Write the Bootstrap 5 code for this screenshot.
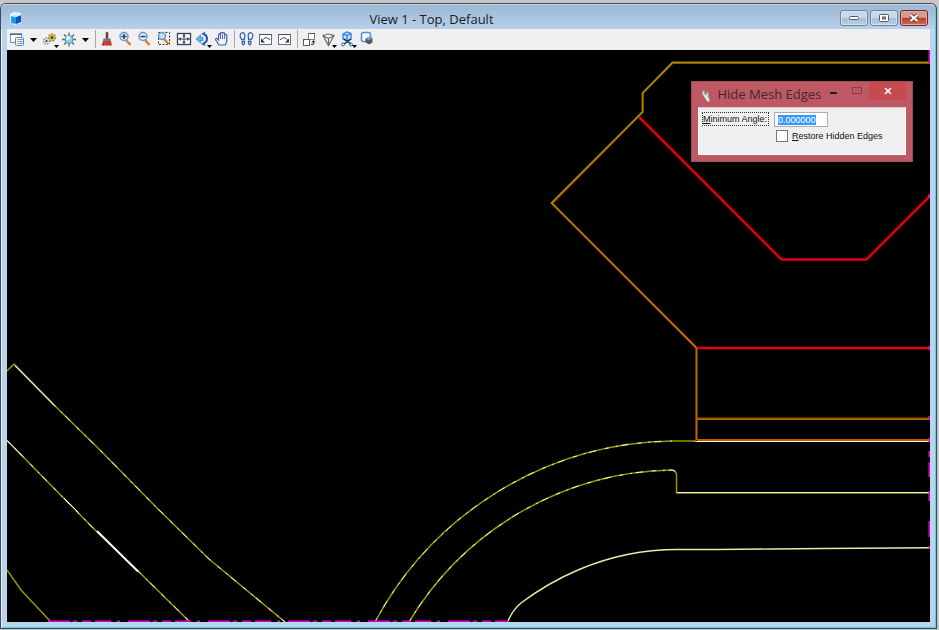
<!DOCTYPE html>
<html lang="en">
<head>
<meta charset="utf-8">
<meta name="viewport" content="width=device-width, initial-scale=1">
<title>View 1 - Top, Default</title>
<link href="https://cdn.jsdelivr.net/npm/bootstrap@5.3.0/dist/css/bootstrap.min.css" rel="stylesheet">
<style>
  body { background: #c4c6c6; font-family: "Open Sans", "Noto Sans", sans-serif; }
  .desk { padding: 3px 2px 1px 0; }
  .view-window {
    border: 1px solid #454b52; border-right-color: #2d4c55; border-bottom-color: #24545c;
    border-radius: 6px 6px 0 0;
    background: #bcd3ec; padding: 0 6px 6px 6px;
    box-shadow: inset 1px 1px 0 #e4eef8, inset -1px -1px 0 #55cde4;
  }
  .view-title {
    height: 25px; margin: 0 -5px 0 -6px; padding: 0 7px 0 8px;
    background: linear-gradient(#9ab5d2, #b9d0ea);
    border-radius: 5px 5px 0 0; box-shadow: inset 0 1px 0 #c3d4e6;
  }
  .view-title h1 { font-size: 13px; line-height: 24px; padding-top: 4px; color: #1a1a1a; }
  .win-group { gap: 2px; margin-top: 2px; }
  .win-btn {
    width: 28px; height: 16px; padding: 0; border: 1px solid #6f839b; border-radius: 3px;
    background: linear-gradient(#c8d9ea 48%, #a4bcd6 52%, #bcd1e6);
    box-shadow: inset 0 0 0 1px #d5e3f0;
  }
  .win-close { border-color: #6b2a26; background: linear-gradient(#d99a8e 45%, #bd3d2c 52%, #cf6b57); box-shadow: inset 0 0 0 1px #e0aaa0; }
  .tools { height: 21px; background: #f0f0f0; }
  .tool { width: 19px; height: 21px; padding: 0; border: 0; background: none; }
  .tool-drop { width: 14px; }
  .tool-sep { width: 1px; height: 18px; margin: 1px 2px 0 3px; background: #a9a9a9; }
  .canvas { background: #000; min-height: 0; }
  .tool-box { top: 31px; right: 17px; width: 222px; padding: 0 7px 7px; background: #bc5964; box-shadow: inset 0 0 0 1px #a34d57; }
  .tool-head { height: 26px; }
  .tool-head h2 { font-size: 13px; line-height: 26px; color: #42282c; margin-left: 7px; }
  .cap-btn { border: 0; padding: 0; background: none; width: 24px; height: 18px; }
  .cap-close { width: 39px; background: #c64a50; margin-top: 1px; }
  .tool-body { height: 48px; background: #f0f0f0; border: 1px solid #fff; border-top-color: #dfc3c6; padding: 4px 3px 0; font-family: "Liberation Sans", Arial, sans-serif; font-size: 9px; line-height: 14px; color: #111; }
  .angle-label { border: 1px dotted #333; min-width: 67px; height: 14px; line-height: 13px; white-space: nowrap; }
  .angle-input { width: 54px; height: 15px; margin-left: 5px; padding: 0 0 0 3px; border: 1px solid #abadb3; border-radius: 0; background: #fff; font-size: 9px; outline: 0; color: #111; }
  .angle-input::selection { background: #3399ff; color: #fff; }
  .restore { margin: 2px 0 0 74px; white-space: nowrap; }
  .restore input { appearance: none; width: 12px; height: 12px; margin: 0 4px 0 0; border: 1px solid #777; background: #fff; }
  .restore input:checked { background: #3399ff; }
</style>
<script src="https://cdn.jsdelivr.net/npm/bootstrap@5.3.0/dist/js/bootstrap.bundle.min.js"></script>
</head>
<body>
<div class="desk vh-100">
<main class="view-window h-100 d-flex flex-column">
  <header class="view-title d-flex align-items-center">
    <svg class="mt-1" width="14" height="16" viewBox="0 0 14 16" aria-hidden="true"><path d="M1 3l4-2 7 1v10l-6 2-5-2z" fill="#e8f6ff"/><path d="M2 5l5 1v7l-5-1z" fill="#1c9bf0"/><path d="M7 6l5-2v7l-5 2z" fill="#0a55c8"/><path d="M2 5l4-2 6 1-5 2z" fill="#c8efff"/></svg>
    <h1 class="flex-grow-1 text-center fw-normal m-0">View 1 - Top, Default</h1>
    <div class="d-flex win-group">
      <button class="win-btn d-flex align-items-center justify-content-center" aria-label="Minimize"><svg width="12" height="6"><rect x="1.500" y="1.500" width="9" height="3" rx="1" fill="#fff" stroke="#535b66"/></svg></button>
      <button class="win-btn d-flex align-items-center justify-content-center" aria-label="Maximize"><svg width="12" height="10"><rect x="1.500" y="1.500" width="9" height="7" rx="1" fill="#fff" stroke="#535b66"/><rect x="4.500" y="4" width="3" height="2" fill="#9ab" stroke="#535b66"/></svg></button>
      <button class="win-btn win-close d-flex align-items-center justify-content-center" aria-label="Close"><svg width="12" height="10"><path d="M2.500 2l7 6M9.500 2l-7 6" stroke="#55474a" stroke-width="4"/><path d="M2.500 2l7 6M9.500 2l-7 6" stroke="#fff" stroke-width="2"/></svg></button>
    </div>
  </header>

  <nav class="tools d-flex" aria-label="View tools">
    <button class="tool" aria-label="View attributes"><svg class="d-block" width="19" height="21" fill="none"><rect x="3.500" y="4.500" width="11" height="9" fill="#fff" stroke="#8392ad"/><path d="M3 5.500h12" stroke="#4b6490"/><rect x="8.500" y="8.500" width="8" height="8" rx="1" fill="#f4f9ff" stroke="#458bd6"/><path d="M10 10.500h2M10 12.500h2M10 14.500h2" stroke="#e09a2c"/><path d="M12.500 10.500h3M12.500 12.500h3M12.500 14.500h3" stroke="#4580c8"/></svg></button>
    <button class="tool tool-drop" aria-label="View attributes menu"><svg class="d-block" width="14" height="21"><path d="M4 9h7l-3.500 4z" fill="#000"/></svg></button>
    <button class="tool" aria-label="Display style"><svg class="d-block" width="19" height="21" fill="none"><circle cx="12" cy="8.500" r="3.500" fill="#d8c35a" stroke="#a8953c" stroke-width="1.500" stroke-dasharray="2 1"/><circle cx="12" cy="8.500" r="1.500" fill="#4c4826"/><circle cx="6.500" cy="12" r="3" fill="#dcefe9" stroke="#829ba3" stroke-width="1.500" stroke-dasharray="1.500 1"/><circle cx="6.500" cy="12" r="1.200" fill="#465a60"/><path d="M14 16h5l-2.500 3z" fill="#000"/></svg></button>
    <button class="tool" aria-label="Adjust brightness"><svg class="d-block" width="19" height="21" fill="none"><path d="M10 3.500v14M3 10.500h14M5 5.500l10 10M15 5.500l-10 10" stroke="#4d6578" stroke-width="1.300"/><circle cx="10" cy="10.500" r="4" fill="#8fd0ee" stroke="#6b8ca3"/><circle cx="9" cy="9" r="2" fill="#e4f8ff"/></svg></button>
    <button class="tool tool-drop" aria-label="Brightness menu"><svg class="d-block" width="14" height="21"><path d="M4 9h7l-3.500 4z" fill="#000"/></svg></button>
    <span class="tool-sep"></span>
    <button class="tool" aria-label="Update view"><svg class="d-block" width="19" height="21"><path d="M8 3.500q1-1 2 0v6h-2z" fill="#8b3c35" stroke="#5d2525" stroke-width=".5"/><path d="M5.500 9.500h7l.5 3h-8z" fill="#6f7683"/><path d="M5 12h8l1 4.500H3.500z" fill="#d8442f"/><path d="M6 12.500l-.5 4M9 12.500v4M11.500 12.500l.5 4" stroke="#9f332e"/></svg></button>
    <button class="tool" aria-label="Zoom in"><svg class="d-block" width="19" height="21" fill="none"><path d="M9 11l4.500 5" stroke="#d28432" stroke-width="2.500"/><circle cx="7" cy="7.500" r="4" fill="#dff0fb" stroke="#6d98c4" stroke-width="1.500"/><path d="M7 5v5M4.500 7.500h5" stroke="#253a6b" stroke-width="1.500"/></svg></button>
    <button class="tool" aria-label="Zoom out"><svg class="d-block" width="19" height="21" fill="none"><path d="M9 11l4.500 5" stroke="#d28432" stroke-width="2.500"/><circle cx="7" cy="7.500" r="4" fill="#dff0fb" stroke="#6d98c4" stroke-width="1.500"/><path d="M4.500 7.500h5" stroke="#253a6b" stroke-width="1.500"/></svg></button>
    <button class="tool" aria-label="Window area"><svg class="d-block" width="19" height="21" fill="none"><path d="M3.500 3.500h11v12h-11z" stroke="#333" stroke-dasharray="2 1.500"/><path d="M9 10l4.500 5" stroke="#d28432" stroke-width="2.500"/><circle cx="7" cy="7" r="3.500" fill="#bfe2f7" stroke="#6d98c4" stroke-width="1.500"/></svg></button>
    <button class="tool" aria-label="Fit view"><svg class="d-block" width="19" height="21" fill="none"><rect x="3.500" y="4.500" width="13" height="11" fill="#fff" stroke="#344055" stroke-width="1.300"/><path d="M10 5v10M4 10h12" stroke="#344055"/><path d="M8 7.500l2-2 2 2zM8 12.500l2 2 2-2zM7 8l-2 2 2 2zM13 8l2 2-2 2z" fill="#344055"/></svg></button>
    <button class="tool" aria-label="Rotate view"><svg class="d-block" width="19" height="21" fill="none"><path d="M11 5c4 2 4 7.500 0 9.500" stroke="#2857a6" stroke-width="2"/><path d="M3 10l4.500-4v2.500H10v3H7.500V14z" fill="#5cbcf6" stroke="#2b78c4" stroke-width=".7"/><path d="M12 2.500v4.500l-4-2zM12 12.500V17l-4-2z" fill="#3568b8"/><path d="M14 16h5l-2.500 3z" fill="#000"/></svg></button>
    <button class="tool" aria-label="Pan view"><svg class="d-block" width="19" height="21" fill="none"><g transform="translate(1 0)"><path d="M6 16l-3.300-5c-.8-1.600.8-2.200 1.800-1l1 1V6c0-1.500 1.900-1.500 1.900 0V4.500c0-1.500 2-1.500 2 0v.3c0-1.500 2.200-1.500 2.200 0V6.200c0-1.400 2.200-1.200 2.200.2V12c0 1.800-1 2.500-1.500 4z" fill="#f0f5ff" stroke="#4562ab" stroke-width="1.200"/><path d="M7.500 6v4M9.500 5.500V10M11.700 6v4" stroke="#4562ab"/></g></svg></button>
    <span class="tool-sep"></span>
    <button class="tool" aria-label="Walk"><svg class="d-block" width="19" height="21" fill="none"><g fill="#eef4ff" stroke="#3b64ae" stroke-width="1.300"><path d="M4.500 4c2.200-1 3.700 1 3.200 3.500L7.300 10.500H4.800C2.800 8 2.500 5 4.500 4zM5.200 12.500h2.300c.6 3.500-2.200 4.500-2.300 1.500z"/><path d="M14.500 4c-2.200-1-3.700 1-3.200 3.500l.4 3h2.500c2-2.500 2.300-5.500.3-6.500zM13.800 12.500h-2.300c-.6 3.500 2.200 4.500 2.300 1.500z"/></g></svg></button>
    <button class="tool" aria-label="View previous"><svg class="d-block" width="19" height="21" fill="none"><rect x="3.500" y="5.500" width="12" height="10" fill="#fff" stroke="#60708f"/><path d="M3 5.500h13" stroke="#3e5176"/><path d="M6 12c2-4 5-4 8-1" stroke="#333"/><path d="M5 9.500v4h4z" fill="#333"/></svg></button>
    <button class="tool" aria-label="View next"><svg class="d-block" width="19" height="21" fill="none"><rect x="3.500" y="5.500" width="12" height="10" fill="#fff" stroke="#60708f"/><path d="M3 5.500h13" stroke="#3e5176"/><path d="M13 12c-2-4-5-4-8-1" stroke="#333"/><path d="M14 9.500v4h-4z" fill="#333"/></svg></button>
    <span class="tool-sep"></span>
    <button class="tool" aria-label="Copy view"><svg class="d-block" width="19" height="21" fill="none"><rect x="8.500" y="4.500" width="6" height="6" fill="#fff" stroke="#777f8c"/><rect x="3.500" y="10.500" width="6" height="6" fill="#fff" stroke="#555c68"/><path d="M8 4.500h7M3 10.500h7" stroke="#555c68"/><path d="M11 15.500h2.500V13" stroke="#444"/><path d="M11.500 13.500l2-2.500 2 2.500z" fill="#333"/></svg></button>
    <button class="tool" aria-label="View perspective"><svg class="d-block" width="19" height="21" fill="none"><path d="M4 6.500L9 5l6 1.500-5.500 10z" fill="#fff" stroke="#666" stroke-width="1.200"/><path d="M4 6.500l5.500 3L15 6.500M9.500 9.500v7" stroke="#666" stroke-width="1.200"/><path d="M13 16h5l-2.500 3z" fill="#000"/></svg></button>
    <button class="tool" aria-label="Clip volume"><svg class="d-block" width="19" height="21" fill="none"><path d="M5 5l4-2 4 1.500V10l-4 2-4-2z" fill="#c9e4ff" stroke="#2e7ad6" stroke-width="1.300"/><path d="M5 5l4 1.500 4-2M9 6.500V12" stroke="#2e7ad6" stroke-width="1.300"/><path d="M6 10l7 5M13 10l-7 5" stroke="#1b2b50" stroke-width="1.500"/><circle cx="5" cy="15.500" r="1.500" stroke="#2b6ac0"/><circle cx="13" cy="15.500" r="1.500" stroke="#2b6ac0"/><path d="M14 16h5l-2.500 3z" fill="#000"/></svg></button>
    <button class="tool" aria-label="Clip mask"><svg class="d-block" width="19" height="21" fill="none"><rect x="4.500" y="3.500" width="9" height="9" rx="2" fill="#f5faff" stroke="#4a8df0" stroke-width="1.500"/><path d="M8.500 9.500l4-2 3 1.500v4.500l-3.500 2-3.500-2z" fill="#555b66"/><path d="M8.500 9.500l4-2 3 1.500-3.500 2z" fill="#9ba0a8"/></svg></button>
  </nav>

  <section class="canvas flex-grow-1 position-relative overflow-hidden">
    <svg class="d-block w-100 h-100" viewBox="7 50 923 572" preserveAspectRatio="xMidYMid slice" fill="none" role="img" aria-label="Mesh edges seen from the top">
      <!-- roof outline: red edge under an olive edge -->
      <g stroke="#c81400" stroke-width="1.500"><path d="M930 63H673l-30 30v19l-90.500 91.500L696.500 347v93"/></g>
      <path d="M930 62.500H672.500l-30 30.500v19l-91 91 145 145v92" stroke="#989000" stroke-width="1.800"/>
      <path d="M639 117l142.500 142.500h85L930 196M697 348h233" stroke="#e60000" stroke-width="2.500"/>
      <path d="M697 418.500h233" stroke="#b84a00" stroke-width="2"/><path d="M697 419.500h233" stroke="#8c8400"/>
      <path d="M697 440h233" stroke="#c85a00" stroke-width="2"/><path d="M694 441.500h236" stroke="#fff6d0"/>
      <path d="M553 204L696.500 347.500V440" stroke="#c06000"/>
      <!-- curved kerbs -->
      <g stroke="#969600" stroke-width="1.500">
        <path d="M375 622A343 343 0 0 1 672 441h24"/>
        <path d="M409 622A313 313 0 0 1 672 470q5 1 4.500 6v17H930"/>
        <path d="M7 371l7-7 39 40 47 46 57 58 52 51 76 63M7 440.500l90 91.500 41 39 52 51M7 570l14 20 30 32"/>
      </g>
      <g stroke="#fffbd2" stroke-dasharray="4 7 2 4 7 9">
        <path d="M375 622A343 343 0 0 1 672 441"/>
        <path d="M409 622A313 313 0 0 1 672 470q5 1 4.500 6"/>
        <path d="M53 404l47 46 57 58 52 51 76 63"/>
        <path d="M7 440.500l90 91.500"/><path d="M138 571l52 51"/>
      </g>
      <path d="M15 365.500l39 39.500" stroke="#d8d8b0" stroke-width="1.500"/>
      <path d="M7 440.500l15 15M64 498l14 14" stroke="#fff"/><path d="M97 531l41 40.500" stroke="#fff" stroke-width="1.800"/>
      <path d="M677 492.500h253" stroke="#f6f4b8"/>
      <path d="M507.500 622q5-12 13.500-19C545 585 600 549.500 677 549.500h41l53-.5 53-.5 106-.8" stroke="#eeeaa0" stroke-width="1.400"/>
      <!-- fence boundary -->
      <path d="M48 621.200h460" stroke="#d800d8" stroke-width="1.500" stroke-dasharray="22 3 4 5 9 4 16 6 3 8"/>
      <path d="M929.200 50v14M929.200 194v4M929.200 346v4M929.200 416v4M929.200 438v4M929.200 451v6M929.200 462v15M929.200 491v10M929.200 521v16M929.200 546v3" stroke="#e000e0" stroke-width="1.500"/>
    </svg>

    <form class="tool-box position-absolute" aria-label="Hide Mesh Edges">
      <div class="tool-head d-flex align-items-start">
        <svg class="ms-1 mt-2" width="9" height="14" viewBox="0 0 9 14" aria-hidden="true"><path d="M1 1l2 1v3l2 0V2l2 2v4l2 4-3 1.500-3-4.500L0 5z" fill="#d8dadb" stroke="#858b8f" stroke-width=".8"/><path d="M3 7l3 5" stroke="#fff"/></svg>
        <h2 class="flex-grow-1 fw-normal mb-0 text-nowrap">Hide Mesh Edges</h2>
        <button type="button" class="cap-btn" aria-label="Minimize"><svg class="d-block" width="24" height="18"><path d="M9 12h7" stroke="#2c1a1c" stroke-width="2"/></svg></button>
        <button type="button" class="cap-btn" aria-label="Maximize"><svg class="d-block" width="24" height="18" fill="none"><path d="M7.500 6.500h9v6h-9zM7 6.500h10" stroke="#8b3b45"/></svg></button>
        <button type="button" class="cap-btn cap-close d-flex align-items-center justify-content-center" aria-label="Close"><svg width="8" height="8"><path d="M1 1l6 6M7 1L1 7" stroke="#fff" stroke-width="1.600"/></svg></button>
      </div>
      <div class="tool-body">
        <div class="d-flex">
          <label class="angle-label" for="angle"><u>M</u>inimum Angle:</label>
          <input class="angle-input" id="angle" type="text" value="0.000000">
        </div>
        <div class="restore d-flex align-items-center">
          <input type="checkbox" id="restore"><label for="restore"><u>R</u>estore Hidden Edges</label>
        </div>
      </div>
    </form>
  </section>
</main>
</div>
<script>
  const angle = document.getElementById('angle');
  angle.focus();
  angle.select();
</script>
</body>
</html>
